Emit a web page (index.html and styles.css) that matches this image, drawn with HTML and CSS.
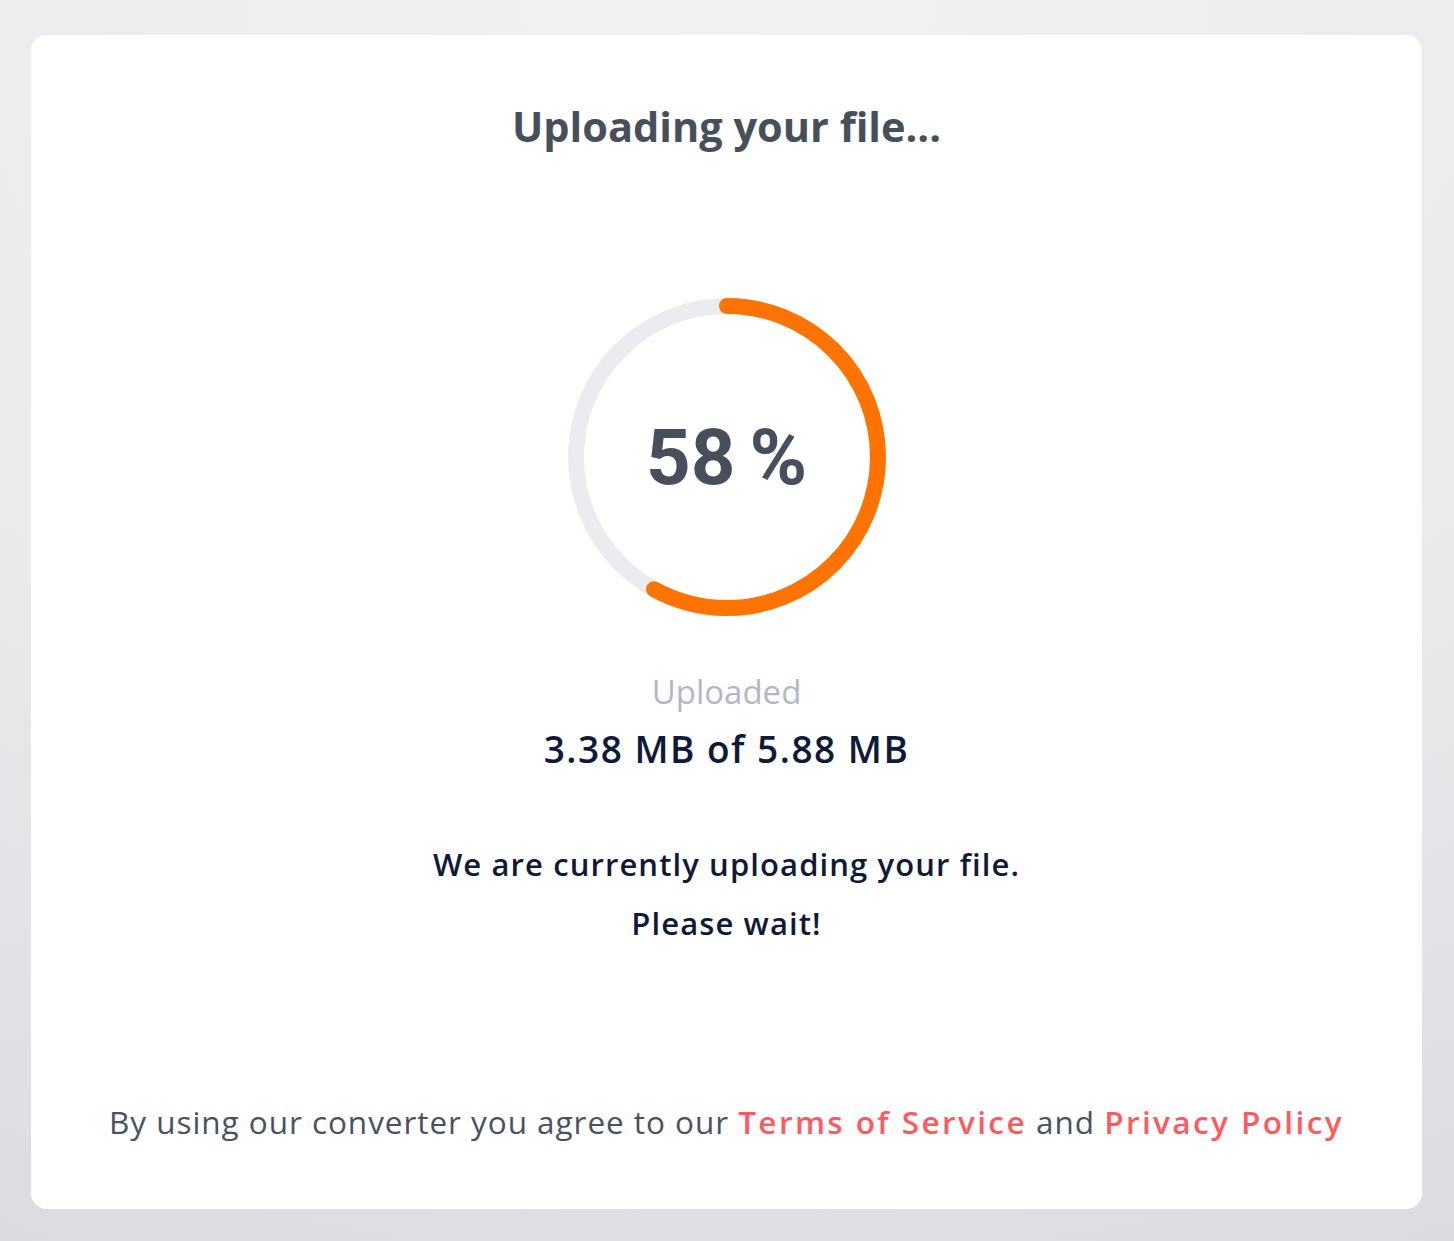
FILE: index.html
```html
<!DOCTYPE html>
<html lang="en">
<head>
<meta charset="utf-8">
<title>Uploading</title>
<link rel="stylesheet" href="styles.css">
</head>
<body>
<div class="page">
  <main class="card">
    <h1 class="title">Uploading your file...</h1>
    <div class="progress">
      <svg class="ring" width="320" height="320" viewBox="0 0 320 320">
        <circle cx="160" cy="160" r="151" fill="none" stroke="#ebecf0" stroke-width="16"/>
        <circle cx="160" cy="160" r="151" fill="none" stroke="#ff7300" stroke-width="16" stroke-linecap="round" stroke-dasharray="550.3 999" transform="rotate(-90 160 160)"/>
      </svg>
      <div class="percent">58<span class="pct-sign">%</span></div>
    </div>
    <div class="uploaded-label">Uploaded</div>
    <div class="uploaded-size">3.38 MB of 5.88 MB</div>
    <p class="message">We are currently uploading your file.<br>Please wait!</p>
    <p class="legal">By using our converter you agree to our <a href="#" class="link">Terms of Service</a> and <a href="#" class="link">Privacy Policy</a></p>
  </main>
</div>
</body>
</html>
```
FILE: styles.css
```css
html, body {
  margin: 0;
  height: 100%;
}
body {
  background: radial-gradient(ellipse 120% 110% at 50% 0%, #f2f2f4 0%, #ebebee 55%, #dcdbe0 100%);
  font-family: "Open Sans", "Lato", sans-serif;
}
.page {
  padding: 35px 32px 32px 31px;
}
.card {
  background: #ffffff;
  border-radius: 16px;
  height: 1174px;
  box-sizing: border-box;
  display: flex;
  flex-direction: column;
  align-items: center;
  padding-top: 62px;
}
.title {
  margin: 0;
  font-size: 41.5px;
  font-weight: 700;
  color: #474f5b;
  line-height: 58px;
}
.progress {
  position: relative;
  width: 320px;
  height: 320px;
  margin-top: 142px;
}
.ring {
  display: block;
}
.percent {
  position: absolute;
  inset: 0;
  display: flex;
  align-items: center;
  justify-content: center;
  font-family: "Roboto", sans-serif;
  font-weight: 700;
  font-size: 78px;
  color: #474f5c;
}
.pct-sign {
  margin-left: 14px;
}
.uploaded-label {
  margin-top: 55px;
  font-size: 33px;
  color: #b4b8c5;
  line-height: 40px;
}
.uploaded-size {
  margin-top: 14px;
  font-size: 37px;
  font-weight: 600;
  color: #0e1a38;
  line-height: 46px;
  letter-spacing: 1.5px;
}
.message {
  margin: 63px 0 0;
  text-align: center;
  font-size: 31px;
  font-weight: 600;
  color: #0e1a38;
  line-height: 59px;
  letter-spacing: 1.1px;
}
.legal {
  margin: auto 0 65px;
  font-size: 31.5px;
  color: #4a5261;
  line-height: 44px;
  letter-spacing: 0.95px;
}
.link {
  color: #ff5a60;
  font-weight: 600;
  letter-spacing: 2.4px;
  text-decoration: none;
}
```
